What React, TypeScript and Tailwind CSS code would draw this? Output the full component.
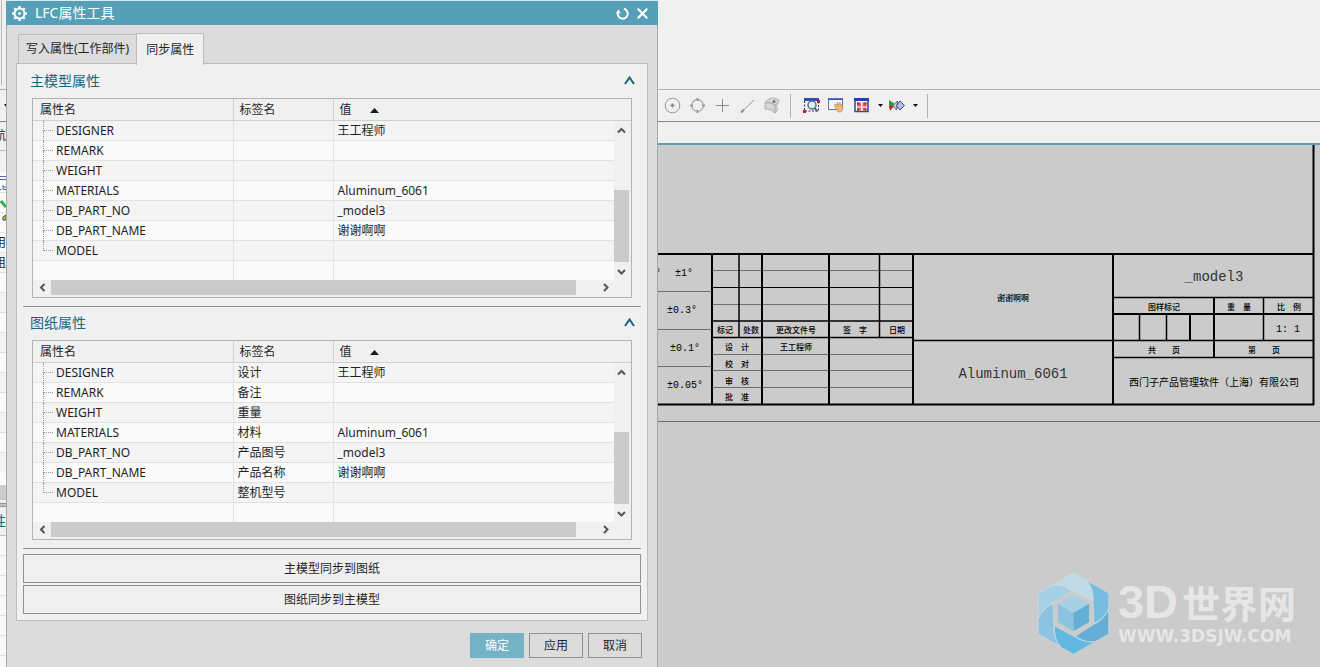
import { useState, type ReactNode } from 'react'

type Attribute = { name: string; label: string; value: string }

const MODEL_ATTRIBUTES: Attribute[] = [
  { name: 'DESIGNER', label: '', value: '王工程师' },
  { name: 'REMARK', label: '', value: '' },
  { name: 'WEIGHT', label: '', value: '' },
  { name: 'MATERIALS', label: '', value: 'Aluminum_6061' },
  { name: 'DB_PART_NO', label: '', value: '_model3' },
  { name: 'DB_PART_NAME', label: '', value: '谢谢啊啊' },
  { name: 'MODEL', label: '', value: '' },
]

const DRAWING_ATTRIBUTES: Attribute[] = [
  { name: 'DESIGNER', label: '设计', value: '王工程师' },
  { name: 'REMARK', label: '备注', value: '' },
  { name: 'WEIGHT', label: '重量', value: '' },
  { name: 'MATERIALS', label: '材料', value: 'Aluminum_6061' },
  { name: 'DB_PART_NO', label: '产品图号', value: '_model3' },
  { name: 'DB_PART_NAME', label: '产品名称', value: '谢谢啊啊' },
  { name: 'MODEL', label: '整机型号', value: '' },
]

const CHEVRONS = {
  up: 'M1 6.5 4.5 3 8 6.5',
  down: 'M1 3 4.5 6.5 8 3',
  left: 'M6.5 1 3 4.5 6.5 8',
  right: 'M3 1 6.5 4.5 3 8',
}

function ScrollArrow({ dir, className }: { dir: keyof typeof CHEVRONS; className: string }) {
  return (
    <button aria-label={dir} className={`flex shrink-0 items-center justify-center ${className}`}>
      <svg width="9" height="9" viewBox="0 0 9 9" fill="none" stroke="#555" strokeWidth="2">
        <path d={CHEVRONS[dir]} />
      </svg>
    </button>
  )
}

function TreeLine({ last }: { last: boolean }) {
  return (
    <span className="ml-[10px] block h-5 w-[10px] shrink-0">
      <span className="block h-[10px] border-b border-l border-dotted border-[#999]" />
      {!last && <span className="block h-[10px] border-l border-dotted border-[#999]" />}
    </span>
  )
}

function AttributeTable({ rows }: { rows: Attribute[] }) {
  return (
    <div className="mx-[9px] border border-[#b4b4b4] bg-[#f0f0f0]">
      <div className="flex">
        <table className="min-w-0 flex-1 table-fixed border-collapse text-left">
          <colgroup>
            <col className="w-[200px]" />
            <col className="w-[100px]" />
            <col />
          </colgroup>
          <thead>
            <tr className="h-[21px] border-b border-[#cfcfcf]">
              <th className="border-r border-[#cfcfcf] p-0 pt-0.5 pl-[7px] font-normal">属性名</th>
              <th className="border-r border-[#cfcfcf] p-0 pt-0.5 pl-[6px] font-normal">标签名</th>
              <th className="p-0 pt-0.5 pl-[6px] font-normal">
                <button className="flex items-center gap-[18px]">
                  值
                  <svg width="9" height="5" viewBox="0 0 9 5" fill="#1a1a1a">
                    <path d="M0 5 4.5 0 9 5z" />
                  </svg>
                </button>
              </th>
            </tr>
          </thead>
          <tbody>
            {rows.map((row, i) => (
              <tr key={row.name} className="h-5 border-b border-[#e2e2e2] odd:bg-[#f4f4f4] even:bg-[#fafafa]">
                <td className="border-r border-[#e2e2e2] p-0 pt-px">
                  <div className="-my-px flex h-5 items-center">
                    <TreeLine last={i === rows.length - 1} />
                    <span className="ml-[3px]">{row.name}</span>
                  </div>
                </td>
                <td className="border-r border-[#e2e2e2] p-0 pt-px pl-1">{row.label}</td>
                <td className="p-0 pt-px pl-1">{row.value}</td>
              </tr>
            ))}
            <tr className="h-5 bg-[#fafafa]">
              <td className="border-r border-[#e2e2e2] p-0" />
              <td className="border-r border-[#e2e2e2] p-0" />
              <td className="p-0" />
            </tr>
          </tbody>
        </table>
        <div className="flex w-[17px] shrink-0 flex-col">
          <div className="h-[22px] border-b border-[#cfcfcf]" />
          <ScrollArrow dir="up" className="h-[18px] w-[15px]" />
          <div className="h-[51px]" />
          <div className="w-[15px] flex-1 bg-[#cbcbcb]" />
          <ScrollArrow dir="down" className="h-[18px] w-[15px]" />
        </div>
      </div>
      <div className="mb-0.5 flex h-[15px]">
        <ScrollArrow dir="left" className="w-[18px]" />
        <div className="flex-1 bg-[#cbcbcb]" />
        <div className="w-5" />
        <ScrollArrow dir="right" className="mr-[17px] w-[18px]" />
      </div>
    </div>
  )
}

function Section({ title, children }: { title: string; children: ReactNode }) {
  return (
    <section className="border-b border-[#8f8f8f] pb-2">
      <h2 className="flex h-[33px] items-center justify-between pr-[6px] pb-0.5 pl-[7px] text-[14px] text-[#17657f]">
        {title}
        <button aria-label={`折叠${title}`}>
          <svg width="11" height="9" viewBox="0 0 11 9" fill="none" stroke="#17657f" strokeWidth="2">
            <path d="M1 8 5.5 1.5 10 8" />
          </svg>
        </button>
      </h2>
      {children}
    </section>
  )
}

function GearIcon() {
  return (
    <svg width="15" height="15" viewBox="0 0 14 14" fill="none" stroke="#fff">
      <circle cx="7" cy="7" r="4.6" strokeWidth="1.8" />
      <g strokeWidth="2.2">
        <path d="M7 0v2.6M7 11.4V14M0 7h2.6M11.4 7H14" />
        <path d="M2.1 2.1l1.8 1.8M10.1 10.1l1.8 1.8M2.1 11.9l1.8-1.8M10.1 3.9l1.8-1.8" />
      </g>
      <circle cx="7" cy="7" r="1.3" fill="#fff" stroke="none" />
    </svg>
  )
}

function Dialog() {
  const [tab, setTab] = useState('sync')
  const tabClass = (active: boolean) =>
    active
      ? 'relative z-10 -mb-0.5 -ml-px h-8 border border-b-0 border-[#bdbdbd] bg-[#f0f0f0] px-[9px]'
      : 'h-[29px] border border-b-0 border-[#bdbdbd] bg-[#dcdcdc] px-[7px]'

  return (
    <div
      role="dialog"
      aria-label="LFC属性工具"
      className="flex min-w-0 flex-[650] flex-col border-r border-l border-[#a8a8a8] bg-[#dcdcdc]"
    >
      <header className="-mx-px flex h-[25px] items-center border-t border-[#d5ecf2] bg-[#559fb7] pr-[10px] pl-[6px] text-white">
        <GearIcon />
        <h1 className="ml-2 flex-1 text-[14px]">LFC属性工具</h1>
        <button aria-label="重置" className="mr-2">
          <svg width="13" height="13" viewBox="0 0 13 13" fill="none" stroke="#fff" strokeWidth="2">
            <path d="M8 1.8A5 5 0 1 1 2 5" />
            <path d="M0 6.2 2.3 2.6 4.8 6.2z" fill="#fff" stroke="none" />
          </svg>
        </button>
        <button aria-label="关闭">
          <svg width="11" height="11" viewBox="0 0 11 11" stroke="#fff" strokeWidth="2.2">
            <path d="M.8.8 10.2 10.2M10.2.8.8 10.2" />
          </svg>
        </button>
      </header>

      <div role="tablist" className="flex h-[38px] items-end pl-[11px]">
        <button role="tab" aria-selected={tab === 'write'} onClick={() => setTab('write')} className={tabClass(tab === 'write')}>
          写入属性(工作部件)
        </button>
        <button role="tab" aria-selected={tab === 'sync'} onClick={() => setTab('sync')} className={tabClass(tab === 'sync')}>
          同步属性
        </button>
      </div>

      <div className="mx-[9px] flex flex-col border border-[#bdbdbd] bg-[#f0f0f0] px-[6px] pt-px pb-[6px]">
        <Section title="主模型属性">
          <AttributeTable rows={MODEL_ATTRIBUTES} />
        </Section>
        <Section title="图纸属性">
          <AttributeTable rows={DRAWING_ATTRIBUTES} />
        </Section>
        <div className="mt-[5px] flex flex-col gap-0.5">
          <button className="h-[29px] border border-[#919191]">主模型同步到图纸</button>
          <button className="h-[29px] border border-[#919191]">图纸同步到主模型</button>
        </div>
      </div>

      <footer className="mt-3 flex justify-end gap-[5px] pr-[15px]">
        <button className="h-[25px] w-[54px] bg-[#74b2c6] text-white">确定</button>
        <button className="h-[25px] w-[54px] border border-[#919191]">应用</button>
        <button className="h-[25px] w-[54px] border border-[#919191]">取消</button>
      </footer>
    </div>
  )
}

// Sliver of the part navigator that stays visible left of the dialog
function NavigatorEdge() {
  return (
    <div className="flex w-[6px] shrink-0 flex-col overflow-hidden bg-[#f0f0f0]">
      <div className="h-[89px] shrink-0 pb-1 pl-px">
        <div className="h-full border-l border-[#b8b8b8]" />
      </div>
      <div className="flex h-8 shrink-0 items-center justify-end border-t border-[#a9a9a9]">
        <svg width="2" height="3" viewBox="0 0 2 3">
          <path d="M0 0h2v3z" fill="#111" />
        </svg>
      </div>
      <div className="flex h-[29px] shrink-0 items-center justify-end border-t border-[#8a8a8a]">航</div>
      <div className="h-[22px] shrink-0 border-t border-[#bdbdbd]" />
      <svg className="h-[60px] w-[6px] shrink-0 bg-[#fafafa]" viewBox="0 0 6 60">
        <path d="M0 4.5h6M0 7.5h6M0 17.500h1.500M3 13v4.500h3M3 15h3" stroke="#5a62a8" fill="none" />
        <path d="M0 20.500h6M0 40.500h6" stroke="#e2e2e2" />
        <path d="M1 29l5 6" stroke="#2fae4a" strokeWidth="3" />
        <path d="M3 48v-3l3-2v5z" fill="#d8cc2c" stroke="#444" />
      </svg>
      <div className="flex h-5 shrink-0 items-center justify-end border-t border-[#e2e2e2] bg-[#fafafa]">用</div>
      <div className="flex h-5 shrink-0 items-center justify-end border-t border-[#e2e2e2] bg-[#f4f4f4]">组</div>
      {Array.from({ length: 10 }, (_, i) => (
        <div key={i} className="h-5 shrink-0 border-t border-[#e2e2e2] odd:bg-[#f4f4f4] even:bg-[#fafafa]" />
      ))}
      <div className="h-[13px] shrink-0 bg-[#fafafa]" />
      <div className="h-[15px] shrink-0 bg-[#cbcbcb]" />
      <div className="mt-[3px] h-1 shrink-0 border-t border-b border-[#929292] bg-[#c4c4c4]" />
      <div className="flex h-[29px] shrink-0 items-center justify-end border-b border-[#bdbdbd] text-[14px] text-[#17657f]">性</div>
      {Array.from({ length: 7 }, (_, i) => (
        <div key={i} className="h-5 shrink-0 border-b border-[#e2e2e2] bg-[#f8f8f8]" />
      ))}
    </div>
  )
}

function ToolButton({ label, children }: { label: string; children: ReactNode }) {
  return (
    <button aria-label={label} className="shrink-0">
      <svg width="17" height="17" viewBox="0 0 17 17" fill="none">
        {children}
      </svg>
    </button>
  )
}

function Caret({ label }: { label: string }) {
  return (
    <button aria-label={label} className="-mr-[3px] shrink-0">
      <svg width="5" height="3" viewBox="0 0 5 3" fill="#111">
        <path d="M0 0h5L2.500 3z" />
      </svg>
    </button>
  )
}

function Toolbar() {
  return (
    <div role="toolbar" className="flex h-8 items-center gap-2 border-t border-[#b4b4b4] pl-[6px]">
      <ToolButton label="圆心">
        <circle cx="8.500" cy="8.500" r="7.300" stroke="#959595" />
        <path d="M8.500 6.500v4M6.500 8.500h4" stroke="#858585" strokeWidth="1.500" />
      </ToolButton>
      <ToolButton label="象限点">
        <circle cx="8.500" cy="8.500" r="5.800" stroke="#a5a5a5" strokeWidth="1.200" />
        <path d="M8.500 1v3M8.500 13v3M1 8.500h3M13 8.500h3" stroke="#9a9a9a" strokeWidth="2" />
      </ToolButton>
      <ToolButton label="点">
        <path d="M8.500 2v13M2 8.500h13" stroke="#8c8c8c" />
      </ToolButton>
      <ToolButton label="曲线上的点">
        <path d="M3 14.500 15 3" stroke="#999" />
        <path d="M2 15.500l3-3" stroke="#8c8c8c" strokeWidth="2" />
      </ToolButton>
      <ToolButton label="面上的点">
        <path d="M1 6C3 2 7 1 10 1l5 2-1 3c-2 2-1 5 0 7l-3 3c-3-3-6-4-10-4z" fill="#d6d6d6" stroke="#b0b0b0" />
        <path d="M1 6c4-1 7 0 10 2l3-2M11 8v8" stroke="#a8a8a8" />
        <circle cx="10" cy="4.500" r="1.500" fill="#777" />
      </ToolButton>
      <div className="mr-1 ml-px h-[24px] w-px bg-[#b4b4b4]" />
      <ToolButton label="适合窗口">
        <path d="M1.500 4v10h14V4" stroke="#26358f" strokeDasharray="2 1.500" />
        <path d="M1 1h15v3H1z" fill="#2b4fb8" />
        <circle cx="9" cy="8" r="4" fill="#dff0f5" stroke="#5b6e80" strokeWidth="1.500" />
        <path d="M11.500 11l3 3.500" stroke="#5b6e80" strokeWidth="2" />
        <path d="M0 13h3v3H0zM14 3h3v3h-3z" fill="#c2202b" />
      </ToolButton>
      <ToolButton label="平移">
        <path d="M.500 2.500h14v10h-14z" fill="#f6f8fc" stroke="#5a75b8" />
        <path d="M0 2h15" stroke="#2b4fa8" strokeWidth="1.500" />
        <path d="M6 8l2-1 2 2-1-4 2 3 1-3 1 4 1-2 1 5-2 3h-3z" fill="#e9bd79" stroke="#b98a4a" strokeWidth=".6" />
      </ToolButton>
      <ToolButton label="全屏">
        <path d="M2 2.500h13v12H2z" fill="#fff" stroke="#2c4498" strokeWidth="1.500" />
        <path d="M1 1h15v3H1z" fill="#2443a4" />
        <path d="M4 5.500h4v4H4zM9.500 5.500h4v4h-4zM4 10.500h4v3H4zM9.500 10.500h4v3h-4z" fill="#e05a5a" />
        <path d="M4 5.500h2v2H4zM11.500 5.500h2v2h-2zM4 12h2v1.500H4zM11.500 12h2v1.500h-2z" fill="#c01c1c" />
      </ToolButton>
      <Caret label="全屏选项" />
      <ToolButton label="视图方位">
        <path d="M1 3l6 4-6 3z" fill="#2b9a3c" />
        <path d="M1 9l6-1-5 6z" fill="#c42626" />
        <path d="M5 8.500 9.500 4l-1 9z" fill="#c7d0e8" stroke="#444" strokeWidth=".8" />
        <path d="M8.500 8.500 12 4l4.500 4.500L12 13z" fill="#aebfe6" stroke="#35488c" />
      </ToolButton>
      <Caret label="视图方位选项" />
      <div className="ml-[4px] h-[24px] w-px bg-[#b4b4b4]" />
    </div>
  )
}

const SHEET_LABELS: [string, number, number][] = [
  ['标记', 67, 184],
  ['处数', 93, 184],
  ['更改文件号', 138, 184],
  ['签\u2003字', 197, 184],
  ['日期', 239, 184],
  ['设\u2003计', 79, 201],
  ['校\u2003对', 79, 218],
  ['审\u2003核', 79, 235],
  ['批\u2003准', 79, 251],
  ['王工程师', 138, 201],
  ['谢谢啊啊', 355, 152],
  ['图样标记', 506, 161],
  ['重\u2003量', 581, 161],
  ['比\u2003例', 631, 161],
  ['共\u2003\u2003页', 506, 204],
  ['第\u2003\u2003页', 606, 204],
]

const TOLERANCES: [string, number, number][] = [
  ['±1°', 26, 128],
  ['±0.3°', 24, 165],
  ['±0.1°', 27, 203],
  ['±0.05°', 27, 240],
]

function DrawingSheet() {
  return (
    <svg viewBox="0 0 662 522" className="block w-full" fill="none" stroke="#000">
      <g stroke="#6e6e6e">
        <path d="M0 276.500H662M0 146.500H54M0 184.500H54M0 221.500H54" />
        <path d="M54 125.500H255M54 159.500H255M54 209.500H255M54 225.500H255M54 242.500H255" />
      </g>
      <path d="M54 142.500H255M104 192.500H255" />
      <path
        d="M0 109H656M655.500 0V260M0 259.500H656M54 109V260M104 109V260M171 109V260M255 109V260M455 109V260"
        strokeWidth="2"
      />
      <path d="M81 109V192M221.500 109V192M54 176H255M54 192.500H255M255 195.500H656" strokeWidth="1.500" />
      <path d="M455 152.500H656M455 212.500H656M605.500 152V195M481.500 169V195M508.500 169V195" strokeWidth="1.500" />
      <path d="M455 169H656M556 152V212M532 169V195" strokeWidth="2" />

      <g fill="#000" stroke="none" textAnchor="middle" dominantBaseline="central">
        <g className="font-['Noto_Sans_CJK_SC',sans-serif] text-[8px] font-medium">
          {SHEET_LABELS.map(([text, x, y]) => (
            <text key={`${text}${x}`} x={x} y={y}>
              {text}
            </text>
          ))}
        </g>
        <g className="font-['Liberation_Mono',monospace] text-[10px]">
          <text x="0" y="128">°</text>
          {TOLERANCES.map(([text, x, y]) => (
            <text key={text} x={x} y={y}>
              {text}
            </text>
          ))}
          <text x="630" y="184">1: 1</text>
        </g>
        <g className="font-['Liberation_Mono',monospace] text-[14px]" fill="#333">
          <text x="355" y="229">Aluminum_6061</text>
          <text x="556" y="132">_model3</text>
        </g>
        <text x="556" y="236" className="font-['Noto_Sans_CJK_SC',sans-serif] text-[10px]">
          西门子产品管理软件（上海）有限公司
        </text>
      </g>
    </svg>
  )
}

const BLADES = ['#bfdbe8', '#78bde0', '#66aed6', '#62b6df', '#8cc3e0', '#a5d0e5']

function Watermark() {
  return (
    <div className="absolute right-6 bottom-[12px] flex items-center gap-2 text-[#e6e6e6]">
      <svg width="73" height="83" viewBox="50 35 220 250">
        {BLADES.map((fill, i) => (
          <path
            key={fill}
            d="M95 75 160 37 200 60Q220 85 217 122L160 92Q128 70 95 75z"
            transform={`rotate(${i * 60} 160 160)`}
            fill={fill}
            stroke="#cbdce4"
            strokeWidth="2"
          />
        ))}
        <path d="M160 105 207 131 160 158 113 131z" fill="#a5d0e5" />
        <path d="M113 131 160 158V213L113 186z" fill="#8cc3e0" />
        <path d="M207 131 160 158V213L207 186z" fill="#62b0d6" />
      </svg>
      <div className="flex flex-col">
        <div className="flex h-10 items-center font-bold">
          <span className="mr-1 font-['Liberation_Sans',sans-serif] text-[47px] leading-10">3D</span>
          <span className="font-['Noto_Sans_CJK_SC',sans-serif] text-[38px] leading-10">世界网</span>
        </div>
        <div className="mt-1 font-['DejaVu_Sans',sans-serif] text-[17px] leading-5 font-bold">WWW.3DSJW.COM</div>
      </div>
    </div>
  )
}

export default function App() {
  return (
    <div className="flex h-screen overflow-hidden bg-[#f0f0f0] font-['Noto_Sans','Noto_Sans_CJK_SC',sans-serif] text-[12px] leading-4 text-[#1f1f1f]">
      <NavigatorEdge />
      <Dialog />
      <main className="flex min-w-0 flex-[662] flex-col">
        <div className="h-[89px] shrink-0" />
        <Toolbar />
        <div className="h-6 shrink-0 border-t border-b-2 border-t-[#8a8a8a] border-b-[#5f9db0]" />
        <div className="relative flex-1 overflow-hidden bg-[#cbcbcb]">
          <DrawingSheet />
          <Watermark />
        </div>
      </main>
    </div>
  )
}
